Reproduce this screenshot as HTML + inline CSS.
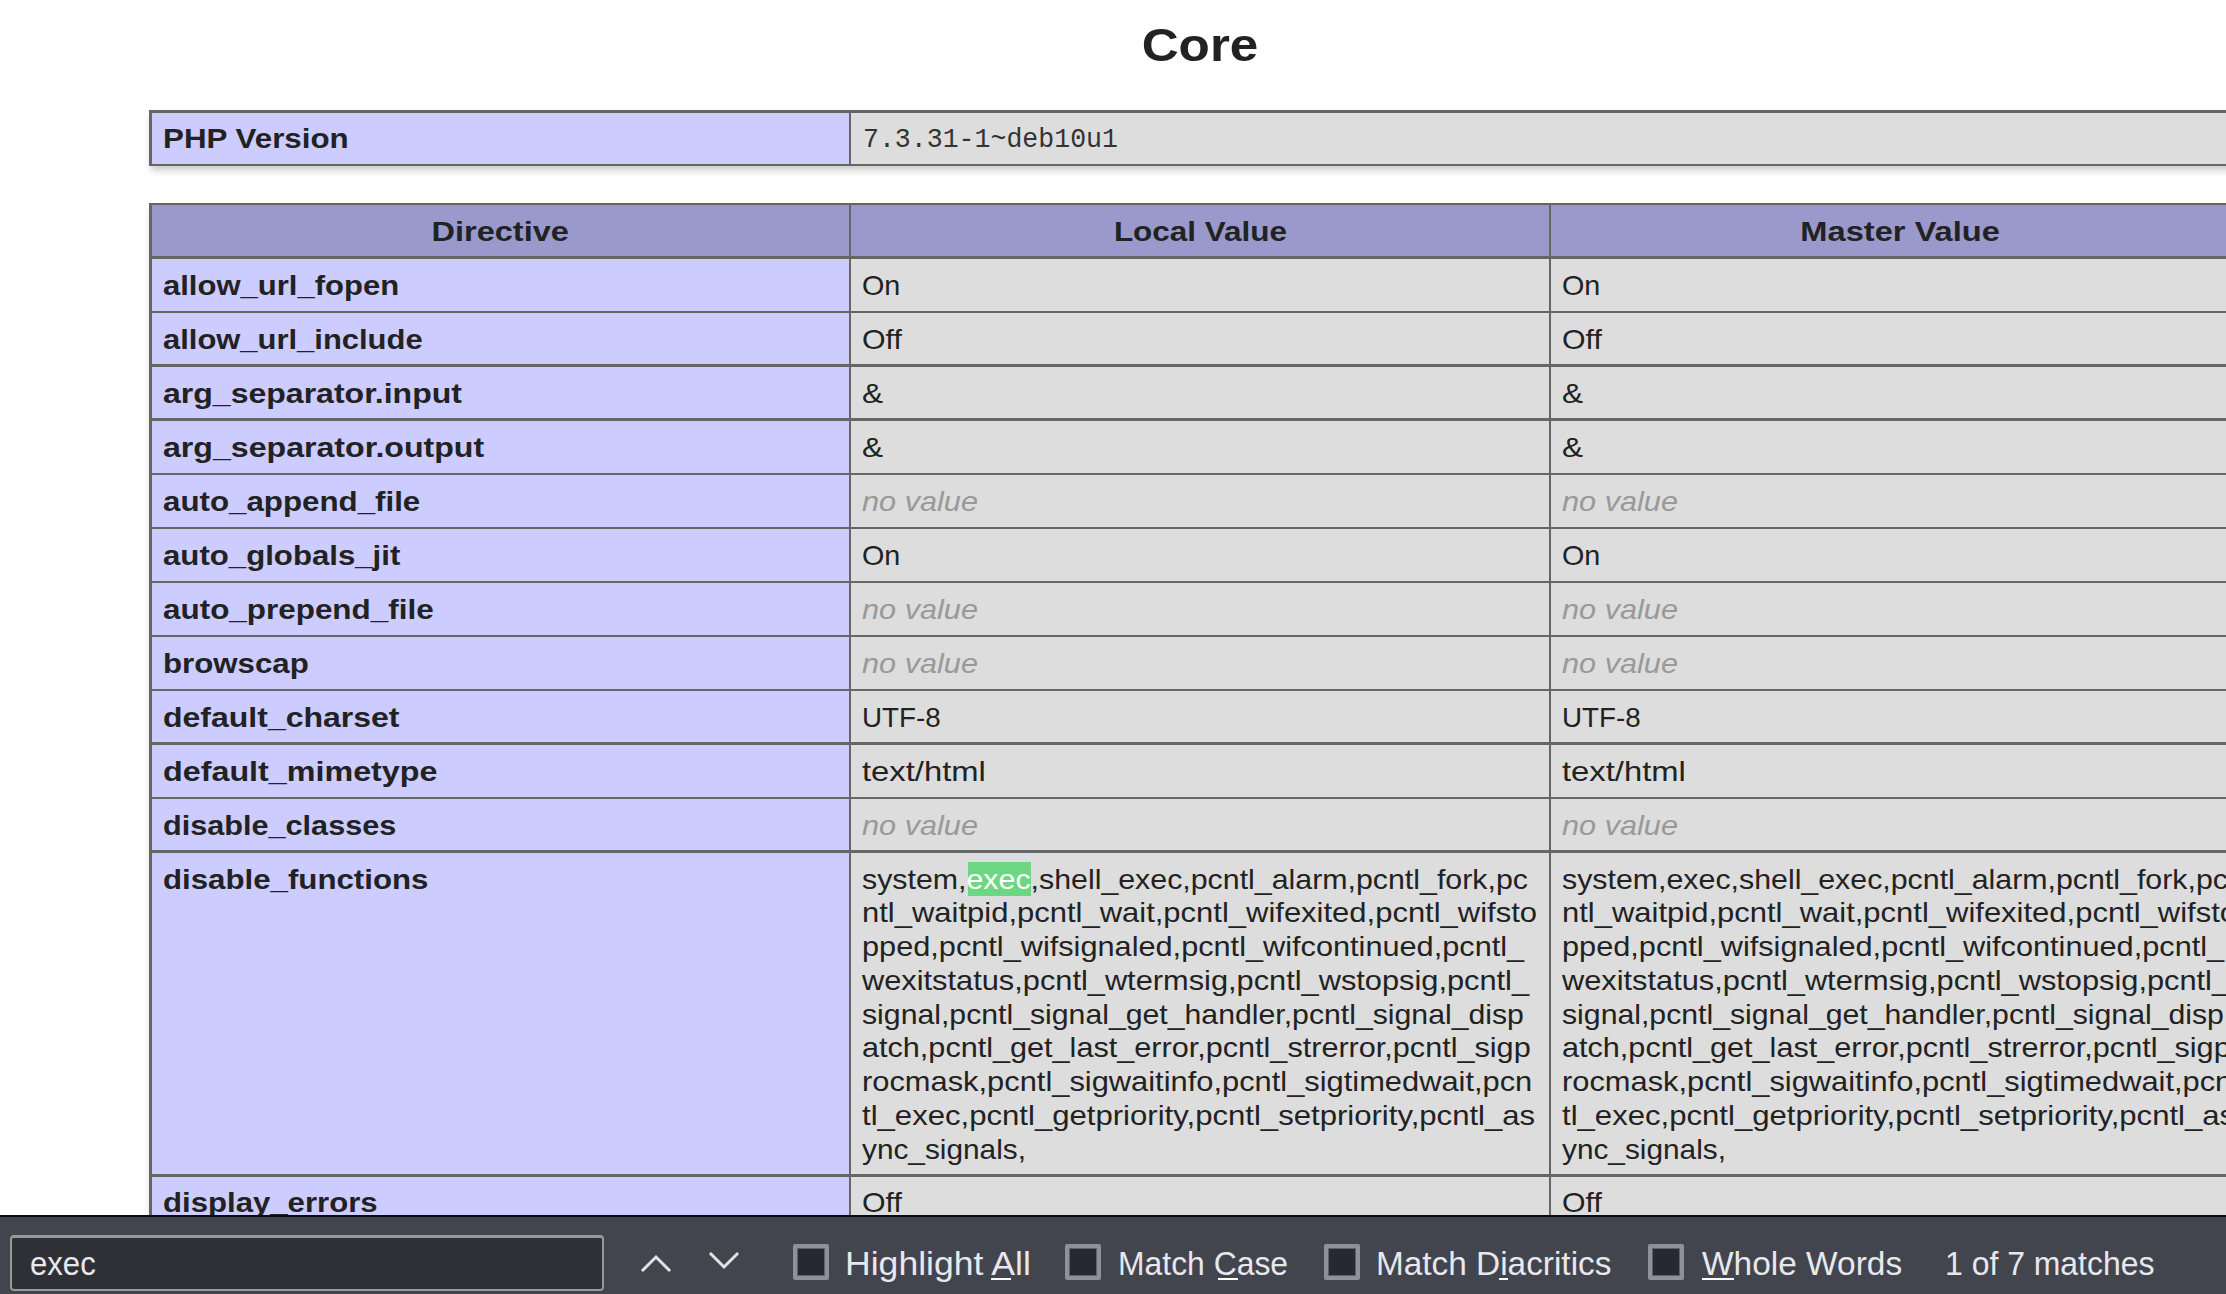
<!DOCTYPE html>
<html><head><meta charset="utf-8"><title>phpinfo()</title>
<style>
html,body{margin:0;padding:0;background:#fff;width:2226px;height:1294px;overflow:hidden;position:relative;font-family:"Liberation Sans",sans-serif;}
.r{position:absolute;}
.t{position:absolute;white-space:pre;line-height:0;height:0;font-family:"Liberation Sans",sans-serif;}
.bd{position:absolute;background:#666;}
.cb{position:absolute;top:1244px;width:36px;height:36px;box-sizing:border-box;border:4px solid #8f8f9d;box-shadow:inset 0 0 0 1px rgba(143,143,157,0.55);border-radius:2px;background:#262832;}
</style></head><body>
<!-- table 1 -->
<div class="r" style="left:149px;top:110px;width:2100px;height:56px;box-shadow:2px 4.5px 7px #ccc;"></div>
<div class="r" style="left:152px;top:113px;width:697px;height:51px;background:#ccf"></div>
<div class="r" style="left:851px;top:113px;width:1400px;height:51px;background:#ddd"></div>
<div class="bd" style="left:149px;top:110px;width:2100px;height:3px"></div>
<div class="bd" style="left:149px;top:164px;width:2100px;height:2px"></div>
<div class="bd" style="left:149px;top:110px;width:3px;height:56px"></div>
<div class="bd" style="left:849px;top:110px;width:2px;height:56px"></div>
<!-- table 2 -->
<div class="r" style="left:149px;top:203px;width:2100px;height:1100px;box-shadow:2px 4.5px 7px #ccc;"></div>
<div class="r" style="left:152px;top:205px;width:2100px;height:51px;background:#99c"></div>
<div class="r" style="left:152px;top:259px;width:697px;height:1100px;background:#ccf"></div>
<div class="r" style="left:851px;top:259px;width:698px;height:1100px;background:#ddd"></div>
<div class="r" style="left:1551px;top:259px;width:700px;height:1100px;background:#ddd"></div>
<div class="bd" style="left:149px;top:203px;width:2100px;height:2px"></div>
<div class="bd" style="left:149px;top:203px;width:3px;height:1100px"></div>
<div class="bd" style="left:849px;top:203px;width:2px;height:1100px"></div>
<div class="bd" style="left:1549px;top:203px;width:2px;height:1100px"></div>
<div class="bd" style="left:149px;top:256px;width:2100px;height:3px"></div>
<div class="bd" style="left:149px;top:311px;width:2100px;height:2px"></div>
<div class="bd" style="left:149px;top:364px;width:2100px;height:3px"></div>
<div class="bd" style="left:149px;top:418px;width:2100px;height:3px"></div>
<div class="bd" style="left:149px;top:473px;width:2100px;height:2px"></div>
<div class="bd" style="left:149px;top:527px;width:2100px;height:2px"></div>
<div class="bd" style="left:149px;top:581px;width:2100px;height:2px"></div>
<div class="bd" style="left:149px;top:635px;width:2100px;height:2px"></div>
<div class="bd" style="left:149px;top:689px;width:2100px;height:2px"></div>
<div class="bd" style="left:149px;top:742px;width:2100px;height:3px"></div>
<div class="bd" style="left:149px;top:797px;width:2100px;height:2px"></div>
<div class="bd" style="left:149px;top:850px;width:2100px;height:3px"></div>
<div class="bd" style="left:149px;top:1174px;width:2100px;height:3px"></div>
<!-- highlight -->
<div class="r" style="left:968px;top:862px;width:63px;height:34px;background:#6dd682"></div>
<div class="t" style="left:1147.02px;top:45.00px;color:#222;font-weight:bold;font-size:46.5px;transform:scaleX(1.1010);transform-origin:50% 0">Core</div>
<div class="t" style="left:163.25px;top:137.70px;color:#222;font-weight:bold;font-size:28.5px;transform:scaleX(1.0991);transform-origin:0 0">PHP Version</div>
<div class="t" style="left:862.60px;top:140.20px;color:#333;font-family:'Liberation Mono',monospace;font-size:28.5px;transform:scaleX(0.9317);transform-origin:0 0">7.3.31-1~deb10u1</div>
<div class="t" style="left:439.80px;top:230.70px;color:#222;font-weight:bold;font-size:28.5px;transform:scaleX(1.1409);transform-origin:50% 0">Directive</div>
<div class="t" style="left:1121.59px;top:230.70px;color:#222;font-weight:bold;font-size:28.5px;transform:scaleX(1.1035);transform-origin:50% 0">Local Value</div>
<div class="t" style="left:1812.87px;top:230.70px;color:#222;font-weight:bold;font-size:28.5px;transform:scaleX(1.1450);transform-origin:50% 0">Master Value</div>
<div class="t" style="left:163.25px;top:284.50px;color:#222;font-weight:bold;font-size:28.5px;transform:scaleX(1.0886);transform-origin:0 0">allow_url_fopen</div>
<div class="t" style="left:862.25px;top:284.50px;color:#222;font-size:28.5px;transform:scaleX(1.0090);transform-origin:0 0">On</div>
<div class="t" style="left:1562.25px;top:284.50px;color:#222;font-size:28.5px;transform:scaleX(1.0090);transform-origin:0 0">On</div>
<div class="t" style="left:163.25px;top:338.50px;color:#222;font-weight:bold;font-size:28.5px;transform:scaleX(1.0856);transform-origin:0 0">allow_url_include</div>
<div class="t" style="left:862.25px;top:338.50px;color:#222;font-size:28.5px;transform:scaleX(1.0629);transform-origin:0 0">Off</div>
<div class="t" style="left:1562.25px;top:338.50px;color:#222;font-size:28.5px;transform:scaleX(1.0629);transform-origin:0 0">Off</div>
<div class="t" style="left:163.25px;top:392.50px;color:#222;font-weight:bold;font-size:28.5px;transform:scaleX(1.1236);transform-origin:0 0">arg_separator.input</div>
<div class="t" style="left:862.25px;top:392.50px;color:#222;font-size:28.5px;transform:scaleX(1.1076);transform-origin:0 0">&amp;</div>
<div class="t" style="left:1562.25px;top:392.50px;color:#222;font-size:28.5px;transform:scaleX(1.1076);transform-origin:0 0">&amp;</div>
<div class="t" style="left:163.25px;top:446.50px;color:#222;font-weight:bold;font-size:28.5px;transform:scaleX(1.1266);transform-origin:0 0">arg_separator.output</div>
<div class="t" style="left:862.25px;top:446.50px;color:#222;font-size:28.5px;transform:scaleX(1.1076);transform-origin:0 0">&amp;</div>
<div class="t" style="left:1562.25px;top:446.50px;color:#222;font-size:28.5px;transform:scaleX(1.1076);transform-origin:0 0">&amp;</div>
<div class="t" style="left:163.25px;top:500.50px;color:#222;font-weight:bold;font-size:28.5px;transform:scaleX(1.0975);transform-origin:0 0">auto_append_file</div>
<div class="t" style="left:862.25px;top:500.50px;color:#999;font-style:italic;font-size:28.5px;transform:scaleX(1.0761);transform-origin:0 0">no value</div>
<div class="t" style="left:1562.25px;top:500.50px;color:#999;font-style:italic;font-size:28.5px;transform:scaleX(1.0761);transform-origin:0 0">no value</div>
<div class="t" style="left:163.25px;top:554.50px;color:#222;font-weight:bold;font-size:28.5px;transform:scaleX(1.0939);transform-origin:0 0">auto_globals_jit</div>
<div class="t" style="left:862.25px;top:554.50px;color:#222;font-size:28.5px;transform:scaleX(1.0090);transform-origin:0 0">On</div>
<div class="t" style="left:1562.25px;top:554.50px;color:#222;font-size:28.5px;transform:scaleX(1.0090);transform-origin:0 0">On</div>
<div class="t" style="left:163.25px;top:608.50px;color:#222;font-weight:bold;font-size:28.5px;transform:scaleX(1.1025);transform-origin:0 0">auto_prepend_file</div>
<div class="t" style="left:862.25px;top:608.50px;color:#999;font-style:italic;font-size:28.5px;transform:scaleX(1.0761);transform-origin:0 0">no value</div>
<div class="t" style="left:1562.25px;top:608.50px;color:#999;font-style:italic;font-size:28.5px;transform:scaleX(1.0761);transform-origin:0 0">no value</div>
<div class="t" style="left:163.25px;top:662.50px;color:#222;font-weight:bold;font-size:28.5px;transform:scaleX(1.0956);transform-origin:0 0">browscap</div>
<div class="t" style="left:862.25px;top:662.50px;color:#999;font-style:italic;font-size:28.5px;transform:scaleX(1.0761);transform-origin:0 0">no value</div>
<div class="t" style="left:1562.25px;top:662.50px;color:#999;font-style:italic;font-size:28.5px;transform:scaleX(1.0761);transform-origin:0 0">no value</div>
<div class="t" style="left:163.25px;top:716.50px;color:#222;font-weight:bold;font-size:28.5px;transform:scaleX(1.1228);transform-origin:0 0">default_charset</div>
<div class="t" style="left:862.25px;top:716.50px;color:#222;font-size:28.5px;transform:scaleX(0.9748);transform-origin:0 0">UTF-8</div>
<div class="t" style="left:1562.25px;top:716.50px;color:#222;font-size:28.5px;transform:scaleX(0.9748);transform-origin:0 0">UTF-8</div>
<div class="t" style="left:163.25px;top:770.50px;color:#222;font-weight:bold;font-size:28.5px;transform:scaleX(1.1327);transform-origin:0 0">default_mimetype</div>
<div class="t" style="left:862.25px;top:770.50px;color:#222;font-size:28.5px;transform:scaleX(1.1503);transform-origin:0 0">text/html</div>
<div class="t" style="left:1562.25px;top:770.50px;color:#222;font-size:28.5px;transform:scaleX(1.1503);transform-origin:0 0">text/html</div>
<div class="t" style="left:163.25px;top:824.50px;color:#222;font-weight:bold;font-size:28.5px;transform:scaleX(1.0746);transform-origin:0 0">disable_classes</div>
<div class="t" style="left:862.25px;top:824.50px;color:#999;font-style:italic;font-size:28.5px;transform:scaleX(1.0761);transform-origin:0 0">no value</div>
<div class="t" style="left:1562.25px;top:824.50px;color:#999;font-style:italic;font-size:28.5px;transform:scaleX(1.0761);transform-origin:0 0">no value</div>
<div class="t" style="left:163.25px;top:878.60px;color:#222;font-weight:bold;font-size:28.5px;transform:scaleX(1.0956);transform-origin:0 0">disable_functions</div>
<div class="t" style="left:862.25px;top:878.60px;color:#222;font-size:28.5px;transform:scaleX(1.0643);transform-origin:0 0">system,<span style="color:#fff">exec</span>,shell_exec,pcntl_alarm,pcntl_fork,pc</div>
<div class="t" style="left:1562.25px;top:878.60px;color:#222;font-size:28.5px;transform:scaleX(1.0643);transform-origin:0 0">system,exec,shell_exec,pcntl_alarm,pcntl_fork,pc</div>
<div class="t" style="left:862.25px;top:912.34px;color:#222;font-size:28.5px;transform:scaleX(1.0870);transform-origin:0 0">ntl_waitpid,pcntl_wait,pcntl_wifexited,pcntl_wifsto</div>
<div class="t" style="left:1562.25px;top:912.34px;color:#222;font-size:28.5px;transform:scaleX(1.0870);transform-origin:0 0">ntl_waitpid,pcntl_wait,pcntl_wifexited,pcntl_wifsto</div>
<div class="t" style="left:862.25px;top:946.08px;color:#222;font-size:28.5px;transform:scaleX(1.0771);transform-origin:0 0">pped,pcntl_wifsignaled,pcntl_wifcontinued,pcntl_</div>
<div class="t" style="left:1562.25px;top:946.08px;color:#222;font-size:28.5px;transform:scaleX(1.0771);transform-origin:0 0">pped,pcntl_wifsignaled,pcntl_wifcontinued,pcntl_</div>
<div class="t" style="left:862.25px;top:979.82px;color:#222;font-size:28.5px;transform:scaleX(1.0798);transform-origin:0 0">wexitstatus,pcntl_wtermsig,pcntl_wstopsig,pcntl_</div>
<div class="t" style="left:1562.25px;top:979.82px;color:#222;font-size:28.5px;transform:scaleX(1.0798);transform-origin:0 0">wexitstatus,pcntl_wtermsig,pcntl_wstopsig,pcntl_</div>
<div class="t" style="left:862.25px;top:1013.56px;color:#222;font-size:28.5px;transform:scaleX(1.0603);transform-origin:0 0">signal,pcntl_signal_get_handler,pcntl_signal_disp</div>
<div class="t" style="left:1562.25px;top:1013.56px;color:#222;font-size:28.5px;transform:scaleX(1.0603);transform-origin:0 0">signal,pcntl_signal_get_handler,pcntl_signal_disp</div>
<div class="t" style="left:862.25px;top:1047.30px;color:#222;font-size:28.5px;transform:scaleX(1.0740);transform-origin:0 0">atch,pcntl_get_last_error,pcntl_strerror,pcntl_sigp</div>
<div class="t" style="left:1562.25px;top:1047.30px;color:#222;font-size:28.5px;transform:scaleX(1.0740);transform-origin:0 0">atch,pcntl_get_last_error,pcntl_strerror,pcntl_sigp</div>
<div class="t" style="left:862.25px;top:1081.04px;color:#222;font-size:28.5px;transform:scaleX(1.0822);transform-origin:0 0">rocmask,pcntl_sigwaitinfo,pcntl_sigtimedwait,pcn</div>
<div class="t" style="left:1562.25px;top:1081.04px;color:#222;font-size:28.5px;transform:scaleX(1.0822);transform-origin:0 0">rocmask,pcntl_sigwaitinfo,pcntl_sigtimedwait,pcn</div>
<div class="t" style="left:862.25px;top:1114.78px;color:#222;font-size:28.5px;transform:scaleX(1.0915);transform-origin:0 0">tl_exec,pcntl_getpriority,pcntl_setpriority,pcntl_as</div>
<div class="t" style="left:1562.25px;top:1114.78px;color:#222;font-size:28.5px;transform:scaleX(1.0915);transform-origin:0 0">tl_exec,pcntl_getpriority,pcntl_setpriority,pcntl_as</div>
<div class="t" style="left:862.25px;top:1148.52px;color:#222;font-size:28.5px;transform:scaleX(1.0453);transform-origin:0 0">ync_signals,</div>
<div class="t" style="left:1562.25px;top:1148.52px;color:#222;font-size:28.5px;transform:scaleX(1.0453);transform-origin:0 0">ync_signals,</div>
<div class="t" style="left:163.25px;top:1202.40px;color:#222;font-weight:bold;font-size:28.5px;transform:scaleX(1.0924);transform-origin:0 0">display_errors</div>
<div class="t" style="left:862.25px;top:1202.40px;color:#222;font-size:28.5px;transform:scaleX(1.0629);transform-origin:0 0">Off</div>
<div class="t" style="left:1562.25px;top:1202.40px;color:#222;font-size:28.5px;transform:scaleX(1.0629);transform-origin:0 0">Off</div>
<!-- find bar -->
<div class="r" style="left:0;top:1215px;width:2226px;height:2px;background:#0c0c0d"></div>
<div class="r" style="left:0;top:1217px;width:2226px;height:77px;background:#42444e"></div>
<div class="r" style="left:10px;top:1235px;width:590px;height:52px;border:2px solid #999;border-top-width:3px;border-bottom-width:2px;height:51px;border-radius:4px;background:#2f3036"></div>
<svg class="r" style="left:630px;top:1240px" width="120" height="40" viewBox="630 1240 120 40">
<polyline points="643,1270 656,1257 669,1270" fill="none" stroke="#e2e2e2" stroke-width="3" stroke-linecap="square"/>
<polyline points="711,1254 724,1267 737,1254" fill="none" stroke="#e2e2e2" stroke-width="3" stroke-linecap="square"/>
</svg>
<div class="cb" style="left:793px"></div>
<div class="cb" style="left:1065px"></div>
<div class="cb" style="left:1324px"></div>
<div class="cb" style="left:1648px"></div>
<div class="r" style="left:991px;top:1278px;width:20px;height:2px;background:#fbfbfe"></div>
<div class="r" style="left:1218px;top:1278px;width:20px;height:2px;background:#fbfbfe"></div>
<div class="r" style="left:1499px;top:1278px;width:9px;height:2px;background:#fbfbfe"></div>
<div class="r" style="left:1702px;top:1278px;width:32px;height:2px;background:#fbfbfe"></div>

<div class="t" style="left:30.15px;top:1264.30px;color:#e8e8ec;font-size:33.5px;transform:scaleX(0.9283);transform-origin:0 0">exec</div>
<div class="t" style="left:844.94px;top:1264.40px;color:#e8e8ec;font-size:33.5px;transform:scaleX(1.0619);transform-origin:0 0">Highlight All</div>
<div class="t" style="left:1117.50px;top:1264.40px;color:#e8e8ec;font-size:33.5px;transform:scaleX(0.9514);transform-origin:0 0">Match Case</div>
<div class="t" style="left:1376.20px;top:1264.40px;color:#e8e8ec;font-size:33.5px;transform:scaleX(0.9958);transform-origin:0 0">Match Diacritics</div>
<div class="t" style="left:1701.50px;top:1264.40px;color:#e8e8ec;font-size:33.5px;transform:scaleX(0.9983);transform-origin:0 0">Whole Words</div>
<div class="t" style="left:1944.90px;top:1264.40px;color:#e8e8ec;font-size:33.5px;transform:scaleX(0.9531);transform-origin:0 0">1 of 7 matches</div>
</body></html>
